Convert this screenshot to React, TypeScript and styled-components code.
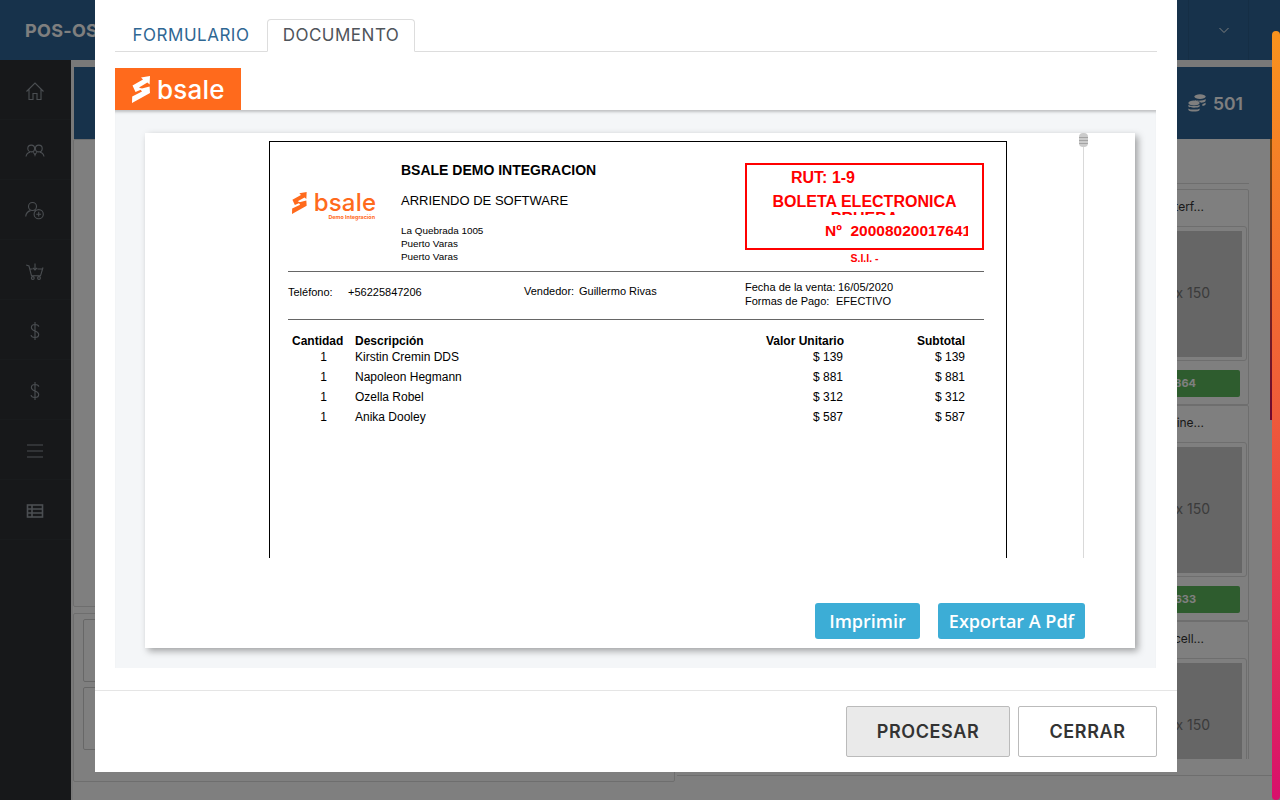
import React from 'react';
import styled, { createGlobalStyle } from 'styled-components';

const GlobalStyle = createGlobalStyle`
  html, body {
    margin: 0;
    padding: 0;
    height: 100%;
    overflow: hidden;
    font-family: "Inter", "Liberation Sans", sans-serif;
  }
  * { box-sizing: border-box; }
`

const Page = styled.div`
  position: relative;
  width: 1280px;
  height: 800px;
  overflow: hidden;
  background: #fafafa;
`
const TopBar = styled.div`
  height: 60px;
  background: #2e6596;
  display: flex;
  align-items: center;
  color: #fff;
`
const Brand = styled.div`
  padding-left: 25px;
  font-size: 18px;
  font-weight: 700;
  letter-spacing: 0.3px;
  flex: 1;
`
const TopBarCell = styled.div`
  width: 61px;
  height: 60px;
  margin-right: 31px;
  padding-left: 11px;
  border-left: 1px solid #2a5d8a;
  border-right: 1px solid #2a5d8a;
  display: flex;
  align-items: center;
  justify-content: center;
`
const Layout = styled.div`
  display: flex;
  height: 740px;
`
const Sidebar = styled.div`
  width: 71px;
  background: #2e3135;
`
const SideItem = styled.div`
  height: 60px;
  padding: 2px 1px 0 0;
  border-bottom: 1px solid #33363a;
  display: flex;
  align-items: center;
  justify-content: center;
  color: #979da4;
`
const Main = styled.div`
  flex: 1;
  background: #f3f3f3;
  padding: 7px 8px 0 2px;
`
const Band = styled.div`
  height: 72px;
  margin-left: 1px;
  background: #2e6596;
  color: #fff;
  display: flex;
  align-items: center;
  justify-content: flex-end;
  gap: 7px;
  padding-right: 29px;
  font-size: 17.5px;
  font-weight: 600;
`
const Columns = styled.div`
  display: flex;
  background: #ffffff;
  height: 661px;
`
const LeftColumn = styled.div`
  width: 602px;
  display: flex;
  flex-direction: column;
  gap: 6px;
`
const LeftPanel = styled.div`
  height: 468px;
  border: 1px solid #dcdcdc;
  border-radius: 2px;
`
const LeftPanelLower = styled.div`
  height: 169px;
  border: 1px solid #dcdcdc;
  border-radius: 2px;
  padding: 5px 9px;
  display: flex;
  flex-direction: column;
  gap: 5px;
`
const LeftBox = styled.div`
  height: 63px;
  border: 1px solid #cfcfcf;
  border-radius: 2px;
`
const RightColumn = styled.div`
  flex: 1;
  margin-left: 2px;
  display: flex;
  flex-direction: column;
  border-bottom: 1px solid #dcdcdc;
  height: 637px;
`
const RightInner = styled.div`
  width: 572px;
  height: 620px;
  padding-top: 44px;
  overflow: hidden;
`
const RightRule = styled.div`
  height: 6px;
  border-top: 1px solid #dcdcdc;
`
const CardList = styled.div`
  display: flex;
  flex-direction: column;
  align-items: flex-end;
`
const Card = styled.div`
  width: 149px;
  height: 216px;
  flex: none;
  border: 1px solid #dcdcdc;
  border-radius: 2px;
`
const CardTitle = styled.div`
  height: 36px;
  line-height: 34px;
  padding-right: 44px;
  text-align: right;
  font-size: 12px;
  color: #333;
`
const CardThumb = styled.div`
  height: 135px;
  border: 1px solid #dcdcdc;
  border-radius: 3px;
  margin-right: 1px;
  padding: 4px 4px 3px 0;
`
const Placeholder = styled.div`
  height: 126px;
  background: #cccccc;
  color: #777;
  font-size: 14px;
  padding: 0 32px 4px 0;
  display: flex;
  align-items: center;
  justify-content: flex-end;
`
const StockTag = styled.div`
  height: 27px;
  margin: 9px 8px 0 0;
  background: #5cb85c;
  border-radius: 2px;
  color: #fff;
  font-size: 11px;
  font-weight: 700;
  padding-right: 44px;
  line-height: 27px;
  text-align: right;
`
const SideThumb = styled.div`
  position: absolute;
  left: 1270px;
  top: 139px;
  width: 2px;
  height: 281px;
  background: linear-gradient(#f7931e, #e0115f);
`
const Dim = styled.div`
  position: absolute;
  inset: 0;
  background: rgba(0, 0, 0, 0.5);
`
const PageScroll = styled.div`
  position: absolute;
  left: 1272px;
  top: 31px;
  width: 8px;
  height: 769px;
  border-radius: 4px;
  background: linear-gradient(#f8931d 0%, #ee5a3a 50%, #d80f6c 100%);
`
const Modal = styled.div`
  position: absolute;
  left: 95px;
  top: 0;
  width: 1082px;
  height: 772px;
  background: #fff;
`
const ModalBody = styled.div`
  padding: 19px 20px 22px;
`
const Tabs = styled.div`
  display: flex;
  height: 33px;
  border-bottom: 1px solid #ddd;
`
const Tab = styled.div<{ $active?: boolean }>`
  height: 33px;
  width: ${(p) => (p.$active ? '148px' : '152px')};
  text-align: center;
  font-size: 17px;
  letter-spacing: 0.5px;
  line-height: 31px;
  color: ${(p) => (p.$active ? '#4f545a' : '#2f6793')};
  border: 1px solid ${(p) => (p.$active ? '#ddd' : 'transparent')};
  border-bottom-color: ${(p) => (p.$active ? '#fff' : 'transparent')};
  border-radius: 4px 4px 0 0;
`
const LogoBar = styled.div`
  width: 126px;
  height: 42px;
  margin-top: 16px;
  background: #ff6a1c;
  display: flex;
  align-items: center;
  padding: 0 0 0 17px;
  gap: 7px;
`
const LogoMark = styled.svg<{ $h: number }>`
  height: ${(p) => p.$h}px;
  width: auto;
  flex: none;
`
const LogoWord = styled.span<{ $size: number; $color: string }>`
  font-family: "Inter", sans-serif;
  font-size: ${(p) => p.$size}px;
  font-weight: 500;
  letter-spacing: 0.2px;
  line-height: 1;
  padding-top: 1px;
  color: ${(p) => p.$color};
`
const Panel = styled.div`
  width: 1041px;
  height: 558px;
  background: #f4f6f8;
  padding: 23px 21px 20px 30px;
  box-shadow: inset 0 4px 3px -2px rgba(0, 0, 0, 0.22);
`
const Paper = styled.div`
  height: 515px;
  background: #fff;
  box-shadow: 3px 3px 7px rgba(0, 0, 0, 0.35);
  padding-left: 124px;
`
const Viewer = styled.div`
  display: flex;
  height: 425px;
  overflow: hidden;
`
const DocFrame = styled.div`
  width: 738px;
  height: 600px;
  margin-top: 8px;
  flex: none;
  border: 1px solid #000;
  padding: 0 22px 0 18px;
  font-family: "Liberation Sans", Arial, sans-serif;
  color: #000;
`
const ViewerTrack = styled.div`
  position: relative;
  width: 1px;
  height: 425px;
  margin-left: 76px;
  background: #d9d9d9;
`
const ViewerThumb = styled.div`
  position: absolute;
  left: -4px;
  top: 0;
  width: 9px;
  height: 14px;
  border-radius: 4px;
  background: linear-gradient(
    #cbcbcb 4px,
    #a4a4a4 4px 5px,
    #cbcbcb 5px 7px,
    #a4a4a4 7px 8px,
    #cbcbcb 8px 10px,
    #a4a4a4 10px 11px,
    #cbcbcb 11px
  );
`
const DocHeader = styled.div`
  display: grid;
  grid-template-columns: 113px 344px 239px;
  padding-top: 21px;
`
const DocLogo = styled.div`
  padding: 27px 0 0 4px;
`
const DocLogoRow = styled.div`
  display: flex;
  align-items: center;
  gap: 7px;
`
const DocLogoSub = styled.div`
  margin-top: -1px;
  font-size: 5.4px;
  font-weight: 700;
  color: #ff6a1c;
  text-align: right;
  width: 83px;
  line-height: 6px;
  font-family: "Inter", sans-serif;
`
const CompanyName = styled.div`
  margin-top: -1px;
  font-size: 14px;
  font-weight: 700;
  line-height: 16px;
`
const CompanyLine = styled.div`
  font-size: 13px;
  line-height: 16px;
  margin-top: 15px;
`
const Address = styled.div`
  font-size: 9.9px;
  line-height: 13px;
  margin-top: 15px;
`
const RedBox = styled.div`
  height: 87px;
  border: 2px solid #f00;
  color: #f00;
  font-size: 16px;
  font-weight: 700;
  line-height: 18px;
  white-space: nowrap;
`
const RutLine = styled.div`
  padding: 4px 0 0 44px;
`
const DocType = styled.div`
  margin-top: 6px;
  text-align: center;
`
const DocTypeClip = styled.div`
  height: 5px;
  margin-top: -1px;
  overflow: hidden;
  text-align: center;
`
const FolioLine = styled.div`
  width: 221px;
  margin-top: 7px;
  padding-left: 78px;
  font-size: 15.5px;
  overflow: hidden;
`
const SiiLine = styled.div`
  margin-top: 2px;
  color: #f00;
  font-size: 10.5px;
  font-weight: 700;
  line-height: 12px;
  text-align: center;
`
const DocRule = styled.div<{ $top?: number }>`
  height: 1px;
  margin-top: ${(p) => p.$top ?? 0}px;
  background: #666;
`
const InfoRow = styled.div`
  display: grid;
  grid-template-columns: 236px 221px 1fr;
  height: 47px;
  font-size: 11px;
`
const InfoCell = styled.div<{ $top: number }>`
  padding-top: ${(p) => p.$top}px;
  display: flex;
  line-height: 14px;
`
const InfoStack = styled.div`
  padding-top: 8px;
  line-height: 14px;
`
const InfoLine = styled.div`
  display: flex;
`
const InfoLabel = styled.span<{ $w: number }>`
  width: ${(p) => p.$w}px;
  flex: none;
`
const DocTable = styled.div`
  width: 673px;
  margin: 14px 0 0 4px;
`
const DocRow = styled.div<{ $head?: boolean }>`
  display: grid;
  grid-template-columns: 63px 1fr 121px 121px;
  font-size: 12px;
  height: ${(p) => (p.$head ? '13px' : '20px')};
  line-height: ${(p) => (p.$head ? '14px' : '20px')};
  font-weight: ${(p) => (p.$head ? 700 : 400)};
`
const DocCell = styled.div<{ $align?: string; $num?: boolean }>`
  text-align: ${(p) => p.$align ?? 'left'};
  padding-right: ${(p) => (p.$num ? '1px' : '0')};
`
const PaperActions = styled.div`
  display: flex;
  justify-content: flex-end;
  gap: 18px;
  padding: 45px 50px 0 0;
`
const BlueButton = styled.button<{ $w: number }>`
  width: ${(p) => p.$w}px;
  height: 36px;
  border: none;
  border-radius: 3px;
  padding: 0;
  background: #3cadd6;
  color: #fff;
  font-family: "Open Sans", sans-serif;
  font-size: 18px;
  font-weight: 600;
`
const ModalFooter = styled.div`
  border-top: 1px solid #e5e5e5;
  padding: 15px 20px 0;
  display: flex;
  justify-content: flex-end;
  gap: 8px;
`
const FooterButton = styled.button<{ $w: number; $pressed?: boolean }>`
  width: ${(p) => p.$w}px;
  height: 51px;
  padding: 0;
  border: 1px solid #bbb;
  border-radius: 2px;
  background: ${(p) => (p.$pressed ? '#eaeaea' : '#fff')};
  color: #333;
  font-family: "Inter", sans-serif;
  font-size: 18px;
  letter-spacing: 0.6px;
  font-weight: 600;
`

const BsaleMark = ({ h, color }: { h: number; color: string }) => (
  <LogoMark $h={h} viewBox="0 0 18 27" fill={color}>
    <path d="M0.5 9.5 L11 3.6 L9 1.4 L18 0 L17.6 8.6 L15.4 6.6 L7 11.5 L10.5 13 L3.5 16 Z" />
    <path d="M8 13 L17.6 10.5 L18 17 L0 27 L0.2 20.4 L10 15.6 Z" />
  </LogoMark>
)

const Stroke = { fill: 'none', stroke: 'currentColor', strokeWidth: 1.1 };

const sideIcons = [
  <svg width="20" height="20" viewBox="0 0 20 20" {...Stroke}>
    <path d="M1.5 10.5 L10 2 L18.5 10.5 M4 8.5 V18.5 H8 V12.5 H12 V18.5 H16 V8.5" />
  </svg>,
  <svg width="20" height="20" viewBox="0 0 20 20" {...Stroke}>
    <circle cx="6.2" cy="7.5" r="3.4" />
    <circle cx="13.8" cy="7.5" r="3.4" />
    <path d="M1 15.5 C1.4 13 3 11.6 5 11.2 M8 11.4 C9 12 9.6 12.6 10 14 C10.4 12.6 11 12 12 11.4 M15 11.2 C17 11.6 18.6 13 19 15.5" />
  </svg>,
  <svg width="20" height="20" viewBox="0 0 20 20" {...Stroke}>
    <circle cx="7.5" cy="5.5" r="4" />
    <path d="M0.7 15.5 C1 12 3.2 10.2 5.5 9.6 M9.5 9.6 L11 10.2" />
    <circle cx="13.7" cy="13.2" r="4.6" />
    <path d="M13.7 10.8 V15.6 M11.3 13.2 H16.1" />
  </svg>,
  <svg width="20" height="20" viewBox="0 0 20 20" {...Stroke}>
    <path d="M1.2 4 L4 5 L6.5 14.8 H15.5 L18 6.5 M5 8 H7.5 M12.5 8 H17" />
    <path d="M10 2.5 V9 M7.8 6.8 L10 9 L12.2 6.8" />
    <circle cx="7.8" cy="17" r="1.4" />
    <circle cx="14" cy="17" r="1.4" />
  </svg>,
  <svg width="20" height="20" viewBox="0 0 20 20" {...Stroke}>
    <path d="M10 1 V19 M13.8 5.6 C13.6 4.2 12 3.5 10 3.5 C7.8 3.5 6.4 4.7 6.4 6.5 C6.4 8.6 8.2 9.4 10 10 C11.8 10.6 13.7 11.4 13.7 13.5 C13.7 15.4 12 16.5 10 16.5 C7.9 16.5 6.2 15.6 6.1 14" />
  </svg>,
  <svg width="20" height="20" viewBox="0 0 20 20" {...Stroke}>
    <path d="M10 1 V19 M13.8 5.6 C13.6 4.2 12 3.5 10 3.5 C7.8 3.5 6.4 4.7 6.4 6.5 C6.4 8.6 8.2 9.4 10 10 C11.8 10.6 13.7 11.4 13.7 13.5 C13.7 15.4 12 16.5 10 16.5 C7.9 16.5 6.2 15.6 6.1 14" />
  </svg>,
  <svg width="20" height="20" viewBox="0 0 20 20" {...Stroke}>
    <path d="M2 4 H18 M2 10 H18 M2 16 H18" />
  </svg>,
  <svg width="20" height="20" viewBox="0 0 20 20" fill="none" stroke="currentColor" strokeWidth="1.6">
    <rect x="2.5" y="4" width="15" height="12" />
    <path d="M7 4 V16 M2.5 8 H17.5 M2.5 12 H17.5" />
  </svg>,
];

const CoinsIcon = () => (
  <svg width="18" height="18" viewBox="0 0 18 18" fill="currentColor">
    <ellipse cx="12" cy="2.6" rx="5.6" ry="2.4" />
    <path d="M7 6 C8 7 16 7 17.6 5 V7 C17 8 15 8.6 13 8.8 C11.6 7.4 9 6.8 7 6.8 Z" />
    <path d="M14.4 10 C16 9.8 17.2 9.2 17.6 8.6 V10.6 C17 11.4 15.8 11.8 14.4 12 Z" />
    <ellipse cx="6" cy="9" rx="5.6" ry="2.4" />
    <path d="M0.4 10.8 C1.4 12.4 10.6 12.4 11.6 10.8 V12.6 C10.6 14.2 1.4 14.2 0.4 12.6 Z" />
    <path d="M0.4 14.4 C1.4 16 10.6 16 11.6 14.4 V16 C10.6 18 1.4 18 0.4 16 Z" />
  </svg>
);

const rows = [
  { name: 'Kirstin Cremin DDS', price: '$ 139' },
  { name: 'Napoleon Hegmann', price: '$ 881' },
  { name: 'Ozella Robel', price: '$ 312' },
  { name: 'Anika Dooley', price: '$ 587' },
];

const cards = [
  { title: 'terf...', stock: '864' },
  { title: 'line...', stock: '633' },
  { title: 'cell...', stock: '' },
];

function App() {
  return (
    <Page>
      <GlobalStyle />
      <TopBar>
        <Brand>POS-OS</Brand>
        <TopBarCell>
          <svg width="12" height="12" viewBox="0 0 12 12" fill="none" stroke="currentColor" strokeWidth="1">
            <path d="M1.5 4 L6 8.5 L10.5 4" />
          </svg>
        </TopBarCell>
      </TopBar>
      <Layout>
        <Sidebar>
          {sideIcons.map((icon, index) => (
            <SideItem key={index}>{icon}</SideItem>
          ))}
        </Sidebar>
        <Main>
          <Band>
            <CoinsIcon />
            <span>501</span>
          </Band>
          <Columns>
            <LeftColumn>
              <LeftPanel />
              <LeftPanelLower>
                <LeftBox />
                <LeftBox />
              </LeftPanelLower>
            </LeftColumn>
            <RightColumn>
              <RightInner>
                <RightRule />
                <CardList>
                  {cards.map((card) => (
                    <Card key={card.title}>
                      <CardTitle>{card.title}</CardTitle>
                      <CardThumb>
                        <Placeholder>x 150</Placeholder>
                      </CardThumb>
                      <StockTag>{card.stock}</StockTag>
                    </Card>
                  ))}
                </CardList>
              </RightInner>
            </RightColumn>
          </Columns>
        </Main>
      </Layout>
      <SideThumb />
      <Dim />
      <PageScroll />
      <Modal>
        <ModalBody>
          <Tabs>
            <Tab>FORMULARIO</Tab>
            <Tab $active>DOCUMENTO</Tab>
          </Tabs>
          <LogoBar>
            <BsaleMark h={27} color="#fff" />
            <LogoWord $size={26} $color="#fff">bsale</LogoWord>
          </LogoBar>
          <Panel>
            <Paper>
              <Viewer>
                <DocFrame>
                  <DocHeader>
                    <DocLogo>
                      <DocLogoRow>
                        <BsaleMark h={22} color="#ff6a1c" />
                        <LogoWord $size={24} $color="#ff6a1c">bsale</LogoWord>
                      </DocLogoRow>
                      <DocLogoSub>Demo Integración</DocLogoSub>
                    </DocLogo>
                    <div>
                      <CompanyName>BSALE DEMO INTEGRACION</CompanyName>
                      <CompanyLine>ARRIENDO DE SOFTWARE</CompanyLine>
                      <Address>
                        La Quebrada 1005
                        <br />
                        Puerto Varas
                        <br />
                        Puerto Varas
                      </Address>
                    </div>
                    <div>
                      <RedBox>
                        <RutLine>RUT: 1-9</RutLine>
                        <DocType>BOLETA ELECTRONICA</DocType>
                        <DocTypeClip>PRUEBA</DocTypeClip>
                        <FolioLine>Nº&nbsp;&nbsp;20008020017641</FolioLine>
                      </RedBox>
                      <SiiLine>S.I.I. -</SiiLine>
                    </div>
                  </DocHeader>
                  <DocRule $top={7} />
                  <InfoRow>
                    <InfoCell $top={13}>
                      <InfoLabel $w={60}>Teléfono:</InfoLabel>
                      <span>+56225847206</span>
                    </InfoCell>
                    <InfoCell $top={12}>
                      <InfoLabel $w={55}>Vendedor:</InfoLabel>
                      <span>Guillermo Rivas</span>
                    </InfoCell>
                    <InfoStack>
                      <InfoLine>
                        <InfoLabel $w={93}>Fecha de la venta:</InfoLabel>
                        <span>16/05/2020</span>
                      </InfoLine>
                      <InfoLine>
                        <InfoLabel $w={91}>Formas de Pago:</InfoLabel>
                        <span>EFECTIVO</span>
                      </InfoLine>
                    </InfoStack>
                  </InfoRow>
                  <DocRule />
                  <DocTable>
                    <DocRow $head>
                      <DocCell>Cantidad</DocCell>
                      <DocCell>Descripción</DocCell>
                      <DocCell $align="right">Valor Unitario</DocCell>
                      <DocCell $align="right">Subtotal</DocCell>
                    </DocRow>
                    {rows.map((row) => (
                      <DocRow key={row.name}>
                        <DocCell $align="center">1</DocCell>
                        <DocCell>{row.name}</DocCell>
                        <DocCell $align="right" $num>{row.price}</DocCell>
                        <DocCell $align="right">{row.price}</DocCell>
                      </DocRow>
                    ))}
                  </DocTable>
                </DocFrame>
                <ViewerTrack>
                  <ViewerThumb />
                </ViewerTrack>
              </Viewer>
              <PaperActions>
                <BlueButton $w={105}>Imprimir</BlueButton>
                <BlueButton $w={147}>Exportar A Pdf</BlueButton>
              </PaperActions>
            </Paper>
          </Panel>
        </ModalBody>
        <ModalFooter>
          <FooterButton $w={164} $pressed>PROCESAR</FooterButton>
          <FooterButton $w={139}>CERRAR</FooterButton>
        </ModalFooter>
      </Modal>
    </Page>
  );
}

export default App;
